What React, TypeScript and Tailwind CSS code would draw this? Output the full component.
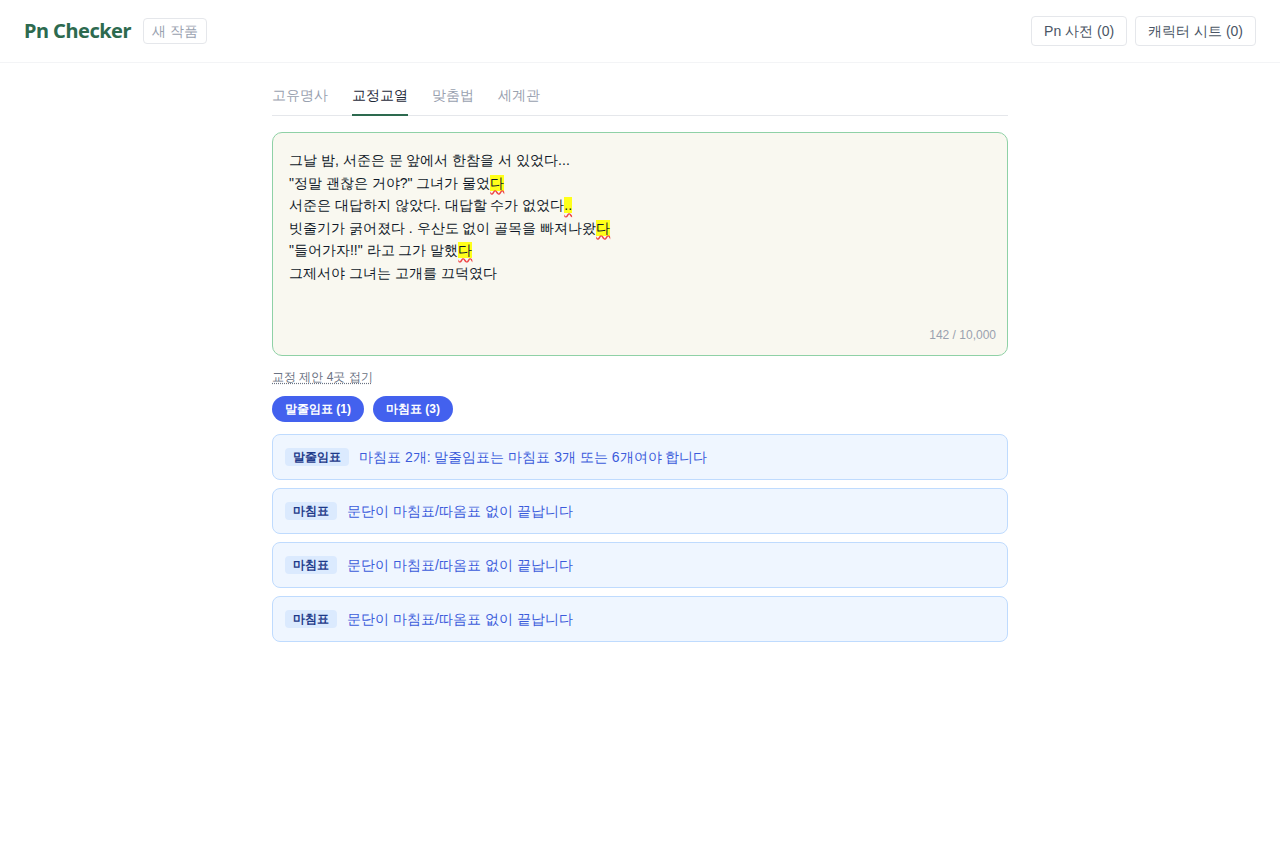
import React, { useState } from 'react'

const FONT = { fontFamily: 'sans-serif' }
const TITLE_FONT = { fontFamily: '"Noto Sans", sans-serif' }

type Seg = { t: string; mark?: boolean }

const lines: Seg[][] = [
  [{ t: '그날 밤, 서준은 문 앞에서 한참을 서 있었다...' }],
  [{ t: '"정말 괜찮은 거야?" 그녀가 물었' }, { t: '다', mark: true }],
  [{ t: '서준은 대답하지 않았다. 대답할 수가 없었다' }, { t: '..', mark: true }],
  [{ t: '빗줄기가 굵어졌다 . 우산도 없이 골목을 빠져나왔' }, { t: '다', mark: true }],
  [{ t: '"들어가자!!" 라고 그가 말했' }, { t: '다', mark: true }],
  [{ t: '그제서야 그녀는 고개를 끄덕였다' }],
]

const tabs = ['고유명사', '교정교열', '맞춤법', '세계관']

const issues = [
  { tag: '말줄임표', msg: '마침표 2개: 말줄임표는 마침표 3개 또는 6개여야 합니다' },
  { tag: '마침표', msg: '문단이 마침표/따옴표 없이 끝납니다' },
  { tag: '마침표', msg: '문단이 마침표/따옴표 없이 끝납니다' },
  { tag: '마침표', msg: '문단이 마침표/따옴표 없이 끝납니다' },
]

export default function App() {
  const [tab, setTab] = useState(1)

  return (
    <div lang="ko" className="min-h-screen bg-white text-gray-900" style={FONT}>
      {/* Header */}
      <header className="h-[63px] flex items-center justify-between px-6 border-b border-gray-100">
        <div className="flex items-center gap-3">
          <h1 className="text-[20px] font-bold text-[#2d6a4f] tracking-tight" style={TITLE_FONT}>Pn Checker</h1>
          <span className="text-sm text-gray-400 border border-gray-200 rounded px-2 h-[26px] flex items-center">새 작품</span>
        </div>
        <div className="flex items-center gap-2">
          <button className="text-sm text-gray-600 border border-gray-200 rounded px-3 h-[30px]">Pn 사전 (0)</button>
          <button className="text-sm text-gray-600 border border-gray-200 rounded px-3 h-[30px]">캐릭터 시트 (0)</button>
        </div>
      </header>

      <main className="w-[736px] mx-auto pt-[22px]">
        {/* Tabs */}
        <div className="flex gap-6 border-b border-gray-200">
          {tabs.map((t, i) => (
            <button
              key={t}
              onClick={() => setTab(i)}
              className={
                'text-sm leading-[20px] pb-[9px] -mb-px border-b-2 ' +
                (i === tab ? 'border-[#2d6a4f] text-gray-800' : 'border-transparent text-gray-400')
              }
            >
              {t}
            </button>
          ))}
        </div>

        {/* Editor */}
        <div className="mt-4 h-[224px] rounded-[10px] border border-[#8fd1a6] bg-[#f9f8f0] px-4 pt-[16px] pb-3 flex flex-col">
          <div className="flex-1 text-sm leading-[22.6px] text-gray-900">
            {lines.map((l, i) => (
              <div key={i}>
                {l.map((s, j) =>
                  s.mark ? (
                    <span
                      key={j}
                      className="bg-[#ffff1a] underline decoration-wavy decoration-[#ef4444] underline-offset-2"
                    >
                      {s.t}
                    </span>
                  ) : (
                    <span key={j}>{s.t}</span>
                  )
                )}
              </div>
            ))}
          </div>
          <div className="text-right text-xs text-gray-400 -mr-[5px]">142 / 10,000</div>
        </div>

        {/* Suggestions */}
        <button className="mt-[13px] text-xs text-gray-500 underline decoration-dotted underline-offset-2">
          교정 제안 4곳 접기
        </button>

        <div className="mt-[8px] flex gap-[9px]">
          <span className="bg-[#4361ee] text-white text-xs font-semibold rounded-full px-[13px] h-[26px] flex items-center">말줄임표 (1)</span>
          <span className="bg-[#4361ee] text-white text-xs font-semibold rounded-full px-[13px] h-[26px] flex items-center">마침표 (3)</span>
        </div>

        <div className="mt-3 flex flex-col gap-2">
          {issues.map((it, i) => (
            <div key={i} className="h-[46px] flex items-center gap-[10px] px-3 rounded-lg border border-[#bfdbfe] bg-[#eff6ff]">
              <span className="text-xs font-bold text-[#1e3a8a] bg-[#dbeafe] rounded px-2 py-[1px]">{it.tag}</span>
              <span className="text-sm text-[#3b5bdb]">{it.msg}</span>
            </div>
          ))}
        </div>
      </main>
    </div>
  )
}
